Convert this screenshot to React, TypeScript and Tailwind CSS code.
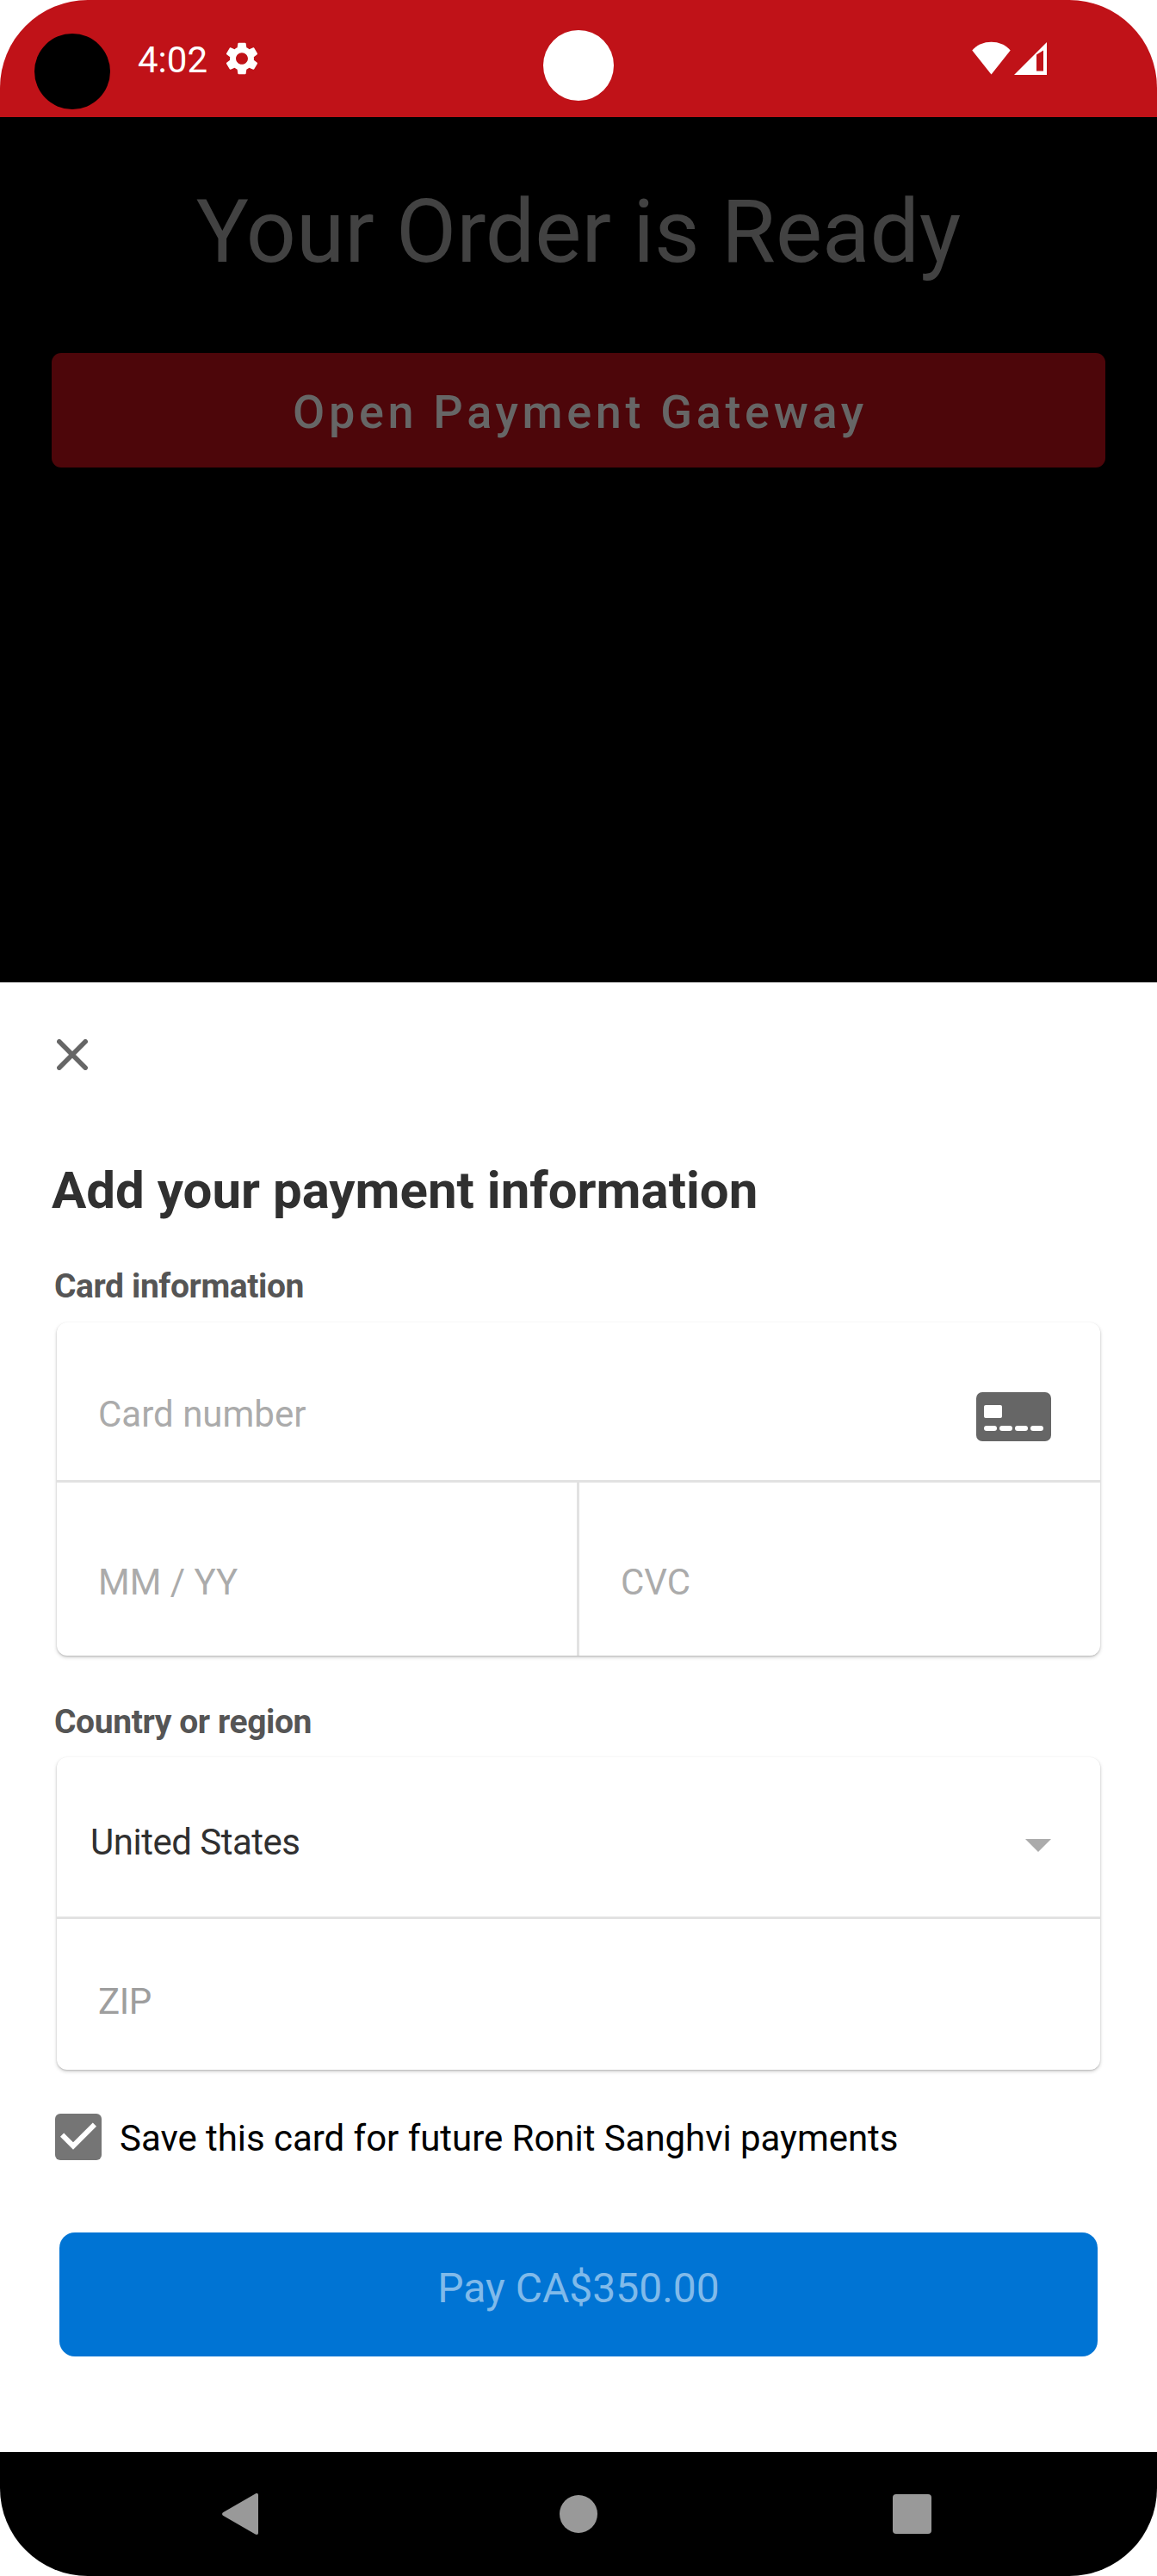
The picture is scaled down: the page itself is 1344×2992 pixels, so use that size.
import React from "react";

function StatusBar() {
  return (
    <header className="relative flex h-[136px] items-start bg-[#c01218] text-white">
      <div className="mt-[39px] ml-[40px] size-[88px] rounded-full bg-black" />
      <span className="mt-[46px] ml-[32px] w-[86px] text-[42px] leading-[48px]">4:02</span>
      <svg className="mt-[49px] ml-[16px] h-[38px] w-[38px]" viewBox="2.2 2 19.6 20" preserveAspectRatio="none" fill="currentColor">
        <path d="M19.14 12.94c.04-.3.06-.61.06-.94 0-.32-.02-.64-.07-.94l2.03-1.58c.18-.14.23-.41.12-.61l-1.92-3.32c-.12-.22-.37-.29-.59-.22l-2.39.96c-.5-.38-1.03-.7-1.62-.94l-.36-2.54c-.04-.24-.24-.41-.48-.41h-3.84c-.24 0-.43.17-.47.41l-.36 2.54c-.59.24-1.13.57-1.62.94l-2.39-.96c-.22-.08-.47 0-.59.22L2.74 8.87c-.12.21-.08.47.12.61l2.03 1.58c-.05.3-.09.63-.09.94s.02.64.07.94l-2.03 1.58c-.18.14-.23.41-.12.61l1.92 3.32c.12.22.37.29.59.22l2.39-.96c.5.38 1.03.7 1.62.94l.36 2.54c.05.24.24.41.48.41h3.84c.24 0 .44-.17.47-.41l.36-2.54c.59-.24 1.13-.56 1.62-.94l2.39.96c.22.08.47 0 .59-.22l1.92-3.32c.12-.22.07-.47-.12-.61l-2.01-1.58zM12 15.6c-1.98 0-3.6-1.62-3.6-3.6s1.62-3.6 3.6-3.6 3.6 1.62 3.6 3.6-1.62 3.6-3.6 3.6z" />
      </svg>
      <div className="absolute top-[35px] left-[631px] size-[82px] rounded-full bg-white" />
      <div className="mt-[48px] mr-[128px] ml-auto flex gap-[4px]">
        <svg className="h-[39px] w-[45px]" viewBox="0 0 46 39" preserveAspectRatio="none" fill="currentColor">
          <path d="M23 38.5 0.3 10.6C6 4 14 .7 23 .7s17 3.3 22.7 9.9z" />
        </svg>
        <svg className="h-[39px] w-[38px]" viewBox="0 0 38 39" fill="currentColor">
          <path fillRule="evenodd" d="M0 39 38 1V39zM26 15.6V34.5H34V10.4z" />
        </svg>
      </div>
    </header>
  );
}

function OrderScreen() {
  return (
    <section className="flex h-[1005px] flex-col items-center bg-black px-[60px]">
      <h1 className="mt-[73px] text-[102px] leading-[120px] whitespace-nowrap text-[#424242]">
        Your Order is Ready
      </h1>
      <button className="mt-[81px] flex h-[133px] w-full justify-center rounded-[11px] bg-[#4d060a] pt-[37px] pl-[4px] text-[54px] leading-[64px] font-medium tracking-[4.65px] whitespace-nowrap text-[#666]">
        Open Payment Gateway
      </button>
    </section>
  );
}

function Card({ children }: { children: React.ReactNode }) {
  return (
    <div className="mx-[66px] overflow-hidden rounded-[12px] bg-white shadow-[0_1px_2px_rgba(0,0,0,0.16),0_2px_4px_rgba(0,0,0,0.18)]">
      {children}
    </div>
  );
}

function PaymentSheet() {
  return (
    <section className="flex h-[1707px] flex-col bg-white">
      <svg className="mt-[66px] ml-[66px] size-[36px] shrink-0 text-[#666]" viewBox="0 0 36 36" stroke="currentColor" strokeWidth="5.5" strokeLinecap="round">
        <path d="M2.8 2.8 33.2 33.2M33.2 2.8 2.8 33.2" />
      </svg>
      <h2 className="mt-[104px] ml-[60px] text-[60px] leading-[72px] font-bold whitespace-nowrap text-[#303030]">
        Add your payment information
      </h2>
      <h3 className="mt-[51px] ml-[63px] text-[39px] leading-[48px] font-bold tracking-[-0.4px] text-[#555]">
        Card information
      </h3>
      <div className="h-[18px]" />
      <Card>
        <div className="flex h-[186px] items-start border-b-[3px] border-[#e2e2e2] pl-[48px] text-[42px] leading-[50px] text-[#ababab]">
          <span className="mt-[82px]">Card number</span>
          <svg className="mt-[81px] mr-[57px] ml-auto h-[57px] w-[87px]" viewBox="0 0 87 57">
            <rect width="87" height="57" rx="7" fill="#666" />
            <g fill="#fff">
              <rect x="9" y="15" width="21" height="15" rx="2" />
              <rect x="9" y="39" width="15" height="6" rx="3" />
              <rect x="27" y="39" width="15" height="6" rx="3" />
              <rect x="45" y="39" width="15" height="6" rx="3" />
              <rect x="63" y="39" width="15" height="6" rx="3" />
            </g>
          </svg>
        </div>
        <div className="flex h-[201px] text-[42px] leading-[50px] text-[#ababab]">
          <div className="w-[607px] border-r-[3px] border-[#e2e2e2] pt-[91px] pl-[48px]">MM / YY</div>
          <div className="flex-1 pt-[91px] pl-[48px]">CVC</div>
        </div>
      </Card>
      <h3 className="mt-[53px] ml-[63px] text-[39px] leading-[48px] font-bold tracking-[-0.4px] text-[#555]">
        Country or region
      </h3>
      <div className="h-[17px]" />
      <Card>
        <div className="flex h-[188px] items-start border-b-[3px] border-[#e2e2e2] pl-[39px] text-[42px] leading-[50px] text-[#303030]">
          <span className="mt-[74px] tracking-[-0.5px]">United States</span>
          <svg className="mt-[95px] mr-[57px] ml-auto h-[15px] w-[30px]" viewBox="0 0 30 15">
            <path d="M0 0H30L15 15z" fill="#ababab" />
          </svg>
        </div>
        <div className="h-[175px] pt-[71px] pl-[48px] text-[42px] leading-[50px] tracking-[-0.4px] text-[#9e9e9e]">ZIP</div>
      </Card>
      <div className="mt-[51px] ml-[64px] flex h-[54px] items-start">
        <svg className="size-[54px]" viewBox="0 0 54 54">
          <rect width="54" height="54" rx="6" fill="#757575" />
          <path d="M21 41.700 6 26.700 10.200 22.500 21 33.200 43.800 10.500 48 14.700z" fill="#fff" />
        </svg>
        <span className="mt-[4px] ml-[21px] text-[42px] leading-[50px] tracking-[-0.04px] whitespace-nowrap text-black">
          Save this card for future Ronit Sanghvi payments
        </span>
      </div>
      <button className="mx-[69px] mt-[84px] flex h-[144px] shrink-0 justify-center rounded-[18px] bg-[#0074d4] pt-[37px] text-[48px] leading-[56px] whitespace-nowrap text-[#80baea]">
        Pay CA$350.00
      </button>
    </section>
  );
}

function NavigationBar() {
  return (
    <nav className="flex h-[144px] items-center bg-black pl-[258px] text-[#999]">
      <svg className="h-[48px] w-[42px]" viewBox="0 0 42 48" fill="currentColor">
        <path d="M38.6.6C40.4-.4 42 .2 42 2V46c0 1.800-1.600 2.400-3.400 1.400L1.800 26.300C-.5 25-.5 23 1.800 21.700z" />
      </svg>
      <div className="ml-[350px] size-[44px] rounded-full bg-[#999]" />
      <div className="ml-[343px] h-[46px] w-[45px] rounded-[4px] bg-[#999]" />
    </nav>
  );
}

export default function App() {
  return (
    <div className="min-h-[2992px] w-[1344px] bg-white">
      <main className="h-[2992px] overflow-hidden rounded-[102px] font-['Roboto',sans-serif]">
        <StatusBar />
        <OrderScreen />
        <PaymentSheet />
        <NavigationBar />
      </main>
    </div>
  );
}
